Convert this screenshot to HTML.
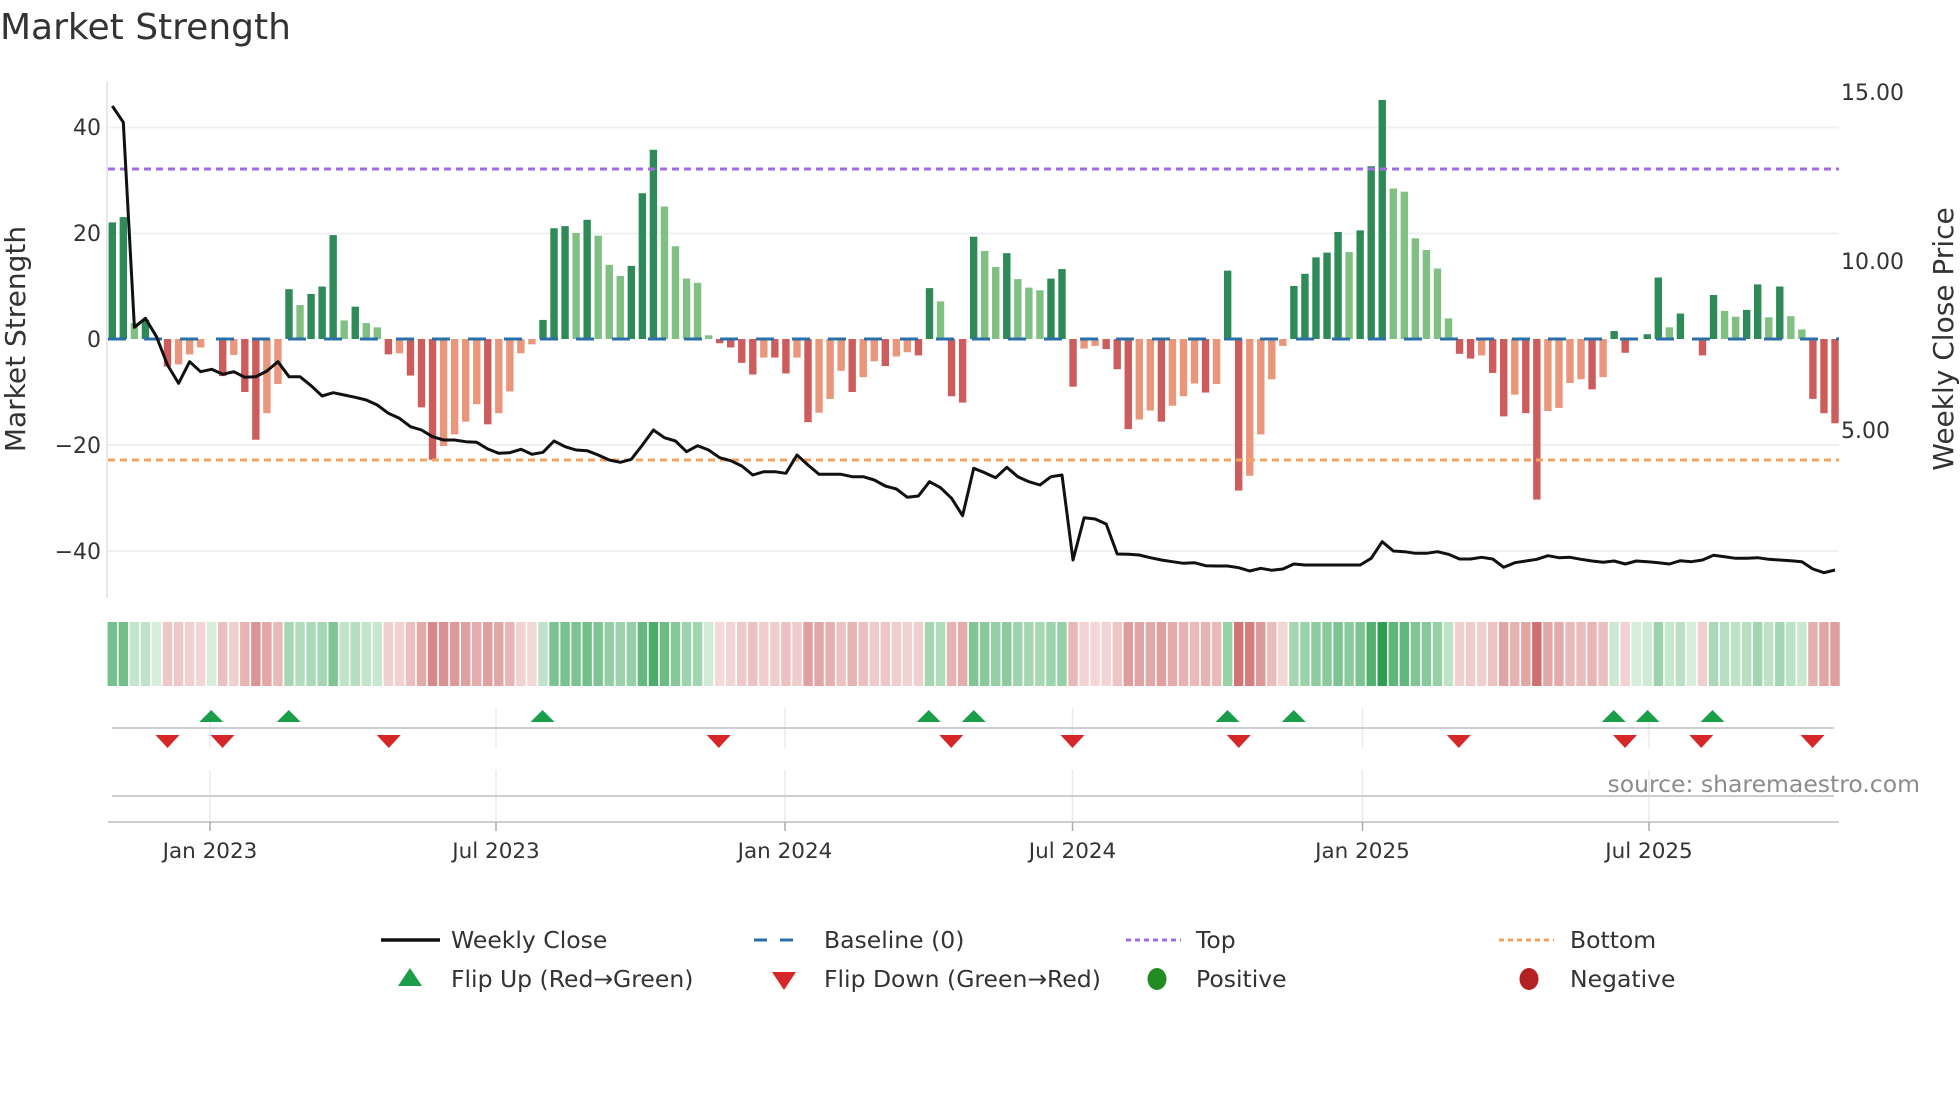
<!DOCTYPE html>
<html><head><meta charset="utf-8"><style>
html,body{margin:0;padding:0;background:#fff;}
svg{display:block;font-family:"DejaVu Sans","Liberation Sans",sans-serif;}
</style></head><body>
<svg id="s" width="1960" height="1102" viewBox="0 0 1960 1102" xmlns="http://www.w3.org/2000/svg">
<rect width="1960" height="1102" fill="#fff"/>
<text x="0" y="39" font-size="36" fill="#333">Market Strength</text>
<g stroke="#eef0f4" stroke-width="2">
<line x1="108" y1="127.5" x2="1839" y2="127.5"/>
<line x1="108" y1="233.5" x2="1839" y2="233.5"/>
<line x1="108" y1="445" x2="1839" y2="445"/>
<line x1="108" y1="551" x2="1839" y2="551"/>
</g>
<line x1="107" y1="81" x2="107" y2="598" stroke="#e6e8ec" stroke-width="2"/>
<g font-size="22" fill="#333" text-anchor="end">
<text x="101" y="135">40</text>
<text x="101" y="241">20</text>
<text x="101" y="347">0</text>
<text x="101" y="453">−20</text>
<text x="101" y="559">−40</text>
</g>
<g font-size="22" fill="#333">
<text x="1841" y="100">15.00</text>
<text x="1841" y="269">10.00</text>
<text x="1841" y="438">5.00</text>
</g>
<text transform="translate(25,339) rotate(-90)" font-size="28" fill="#333" text-anchor="middle">Market Strength</text>
<text transform="translate(1953,339) rotate(-90)" font-size="28" fill="#333" text-anchor="middle">Weekly Close Price</text>
<g id="bars"></g>
<line x1="108" y1="169" x2="1839" y2="169" stroke="#a36be0" stroke-width="3" stroke-dasharray="7,5"/>
<line x1="108" y1="460" x2="1839" y2="460" stroke="#f2a35e" stroke-width="3" stroke-dasharray="7,5"/>
<line x1="108" y1="339" x2="1839" y2="339" stroke="#2a6fa8" stroke-width="3" stroke-dasharray="18,18"/>
<polyline id="price" fill="none" stroke="#111" stroke-width="3" stroke-linejoin="round"/>
<g id="heat"></g>
<g stroke="#e8eaee" stroke-width="1.5">
<line x1="210" y1="708" x2="210" y2="748"/><line x1="496" y1="708" x2="496" y2="748"/><line x1="785" y1="708" x2="785" y2="748"/><line x1="1072.5" y1="708" x2="1072.5" y2="748"/><line x1="1362.5" y1="708" x2="1362.5" y2="748"/><line x1="1649" y1="708" x2="1649" y2="748"/>
<line x1="210" y1="770" x2="210" y2="822"/><line x1="496" y1="770" x2="496" y2="822"/><line x1="785" y1="770" x2="785" y2="822"/><line x1="1072.5" y1="770" x2="1072.5" y2="822"/><line x1="1362.5" y1="770" x2="1362.5" y2="822"/><line x1="1649" y1="770" x2="1649" y2="822"/>
</g>
<line x1="112" y1="728" x2="1834" y2="728" stroke="#ccced2" stroke-width="2"/>
<line x1="112" y1="796" x2="1834" y2="796" stroke="#ccced2" stroke-width="2"/>
<line x1="108" y1="822" x2="1839" y2="822" stroke="#ccced2" stroke-width="2"/>
<g stroke="#aaa" stroke-width="1.5">
<line x1="210" y1="822" x2="210" y2="831"/><line x1="496" y1="822" x2="496" y2="831"/><line x1="785" y1="822" x2="785" y2="831"/><line x1="1072.5" y1="822" x2="1072.5" y2="831"/><line x1="1362.5" y1="822" x2="1362.5" y2="831"/><line x1="1649" y1="822" x2="1649" y2="831"/>
</g>
<g id="marks"></g>
<g font-size="21.5" fill="#333" text-anchor="middle">
<text x="210" y="858">Jan 2023</text>
<text x="496" y="858">Jul 2023</text>
<text x="785" y="858">Jan 2024</text>
<text x="1072.5" y="858">Jul 2024</text>
<text x="1362.5" y="858">Jan 2025</text>
<text x="1649" y="858">Jul 2025</text>
</g>
<text x="1920" y="792" font-size="23.5" fill="#8c8c8c" text-anchor="end">source: sharemaestro.com</text>
<g font-size="23.5" fill="#333">
<line x1="381" y1="940" x2="440" y2="940" stroke="#111" stroke-width="3.5"/>
<text x="451" y="948">Weekly Close</text>
<line x1="754" y1="940" x2="806" y2="940" stroke="#2a6fa8" stroke-width="3" stroke-dasharray="13,13"/>
<text x="824" y="948">Baseline (0)</text>
<line x1="1126" y1="940" x2="1181" y2="940" stroke="#a36be0" stroke-width="3" stroke-dasharray="5,4"/>
<text x="1196" y="948">Top</text>
<line x1="1499" y1="940" x2="1554" y2="940" stroke="#f2a35e" stroke-width="3" stroke-dasharray="5,4"/>
<text x="1570" y="948">Bottom</text>
<polygon points="410,968 398,986 422,986" fill="#1a9e4a"/>
<text x="451" y="987">Flip Up (Red→Green)</text>
<polygon points="772,972 796,972 784,990" fill="#d62728"/>
<text x="824" y="987">Flip Down (Green→Red)</text>
<ellipse cx="1157" cy="979" rx="9.5" ry="11" fill="#228b22"/>
<text x="1196" y="987">Positive</text>
<ellipse cx="1529" cy="979" rx="9.5" ry="11" fill="#b22222"/>
<text x="1570" y="987">Negative</text>
</g>
</svg>
<script>
var V="22G 23G 3L 3.6G 0Z -5.2R -4.8S -2.9S -1.6S 0Z -7R -3S -10R -19R -14S -8.5S 9.4G 6.4L 8.5G 9.9G 19.6G 3.5L 6.1G 3L 2.2L -2.9R -2.7S -6.9R -12.9R -22.8R -20.2S -18S -15.6S -12.3S -16.1R -14S -9.9S -2.7S -1S 3.6G 20.9G 21.3G 20L 22.5G 19.5L 14L 11.9L 13.8G 27.5G 35.7G 25L 17.5L 11.4L 10.6L 0.7L -0.8R -1.6R -4.5R -6.7R -3.5S -3.5R -6.5R -3.5S -15.7R -13.9S -11.3S -6S -10R -7.2S -4.2S -5.1R -3.3S -2.5S -3.1R 9.6G 7.1L -10.8R -12R 19.3G 16.6L 13.6L 16.2G 11.3L 9.7L 9.2L 11.4G 13.2G -9R -1.8S -1.3S -1.9R -5.7R -17R -15.2S -13.5S -15.6R -12.6S -10.8S -8.4S -10.1R -8.5S 12.9G -28.6R -25.8S -18S -7.6S -1.3S 10G 12.3G 15.4G 16.3G 20.2G 16.4L 20.5G 32.6G 45.1G 28.4L 27.8L 19L 16.8L 13.3L 3.9L -2.8R -3.7R -3.1S -6.4R -14.6R -10.5S -14R -30.3R -13.6S -13S -8.3S -7.6S -9.5R -7.2S 1.5G -2.6R 0Z 0.9G 11.6G 2.2L 4.8G 0Z -3.1R 8.3G 5.3L 4.2L 5.5G 10.3G 4.1L 9.9G 4.3L 1.8L -11.3R -14R -15.9R".split(" ");
var P=[48,97,712,685,740,825,880,815,845,838,853,845,862,860,843,815,860,860,887,918,908,915,922,930,945,970,985,1010,1020,1040,1050,1050,1055,1057,1077,1090,1088,1078,1093,1087,1053,1070,1080,
1082,1095,1110,1117,1108,1065,1020,1043,1053,1085,1067,1080,1103,1112,1128,1155,1145,1145,1150,1095,1125,1153,1153,1153,1160,1160,1170,1188,1197,1222,1218,1175,1193,1225,1277,1135,1148,1163,1132,1160,1175,1185,
1160,1155,1410,1283,1287,1302,1392,1393,1395,1403,1410,1415,1420,1418,1427,1428,1428,1433,1443,1435,1441,1437,1422,1425,1425,1425,1425,1425,1425,1405,1355,1383,1385,1390,1390,1385,1393,1407,1407,1402,1407,
1432,1418,1413,1408,1397,1403,1402,1408,1413,1417,1413,1422,1413,1415,1418,1422,1412,1415,1410,1396,1400,1405,1405,1403,1408,1410,1412,1415,1437,1448,1440];
var NS="http://www.w3.org/2000/svg";
function el(t,a,p){var e=document.createElementNS(NS,t);for(var k in a)e.setAttribute(k,a[k]);p.appendChild(e);return e;}
var X0=112.3,ST=11.043,Z=339,U=5.3;
var C={G:"#2e8b57",L:"#80c183",R:"#cd5c5c",S:"#e9967a",Z:"#80c183"};
var bars=document.getElementById("bars"),heat=document.getElementById("heat");
function mix(a,b,t){var r=[];for(var i=0;i<3;i++)r.push(Math.round(a[i]+(b[i]-a[i])*t));return "rgb("+r.join(",")+")";}
var pts=[];
for(var i=0;i<V.length;i++){
 var v=parseFloat(V[i]),c=V[i].slice(-1),x=X0+i*ST;
 var h=Math.abs(v)*U;
 if(h>0.5) el("rect",{x:x-3.7,y:v>0?Z-h:Z,width:7.4,height:h,fill:C[c]},bars);
 var col;
 if(v>=0){var t=Math.min(Math.pow(v/45,0.8),1);col=mix([214,238,219],[44,158,80],t);}
 else{var t=Math.min(Math.pow(-v/30,0.9),1);col=mix([245,221,221],[207,112,112],t);}
 el("rect",{x:x-ST/2+0.8,y:622,width:ST-1.6,height:64,fill:col},heat);
 pts.push(x.toFixed(1)+","+(90+P[i]/3).toFixed(1));
}
document.getElementById("price").setAttribute("points",pts.join(" "));
var M=document.getElementById("marks");
[169,231,434,743,779,982,1035,1291,1318,1370].forEach(function(d){var x=d*1.25;el("polygon",{points:(x)+",710 "+(x-12)+",722 "+(x+12)+",722",fill:"#1a9e4a"},M);});
[134,178,311,575,761,858,991,1167,1300,1361,1450].forEach(function(d){var x=d*1.25;el("polygon",{points:(x-12)+",735 "+(x+12)+",735 "+x+",748",fill:"#d62728"},M);});
</script>
</body></html>
